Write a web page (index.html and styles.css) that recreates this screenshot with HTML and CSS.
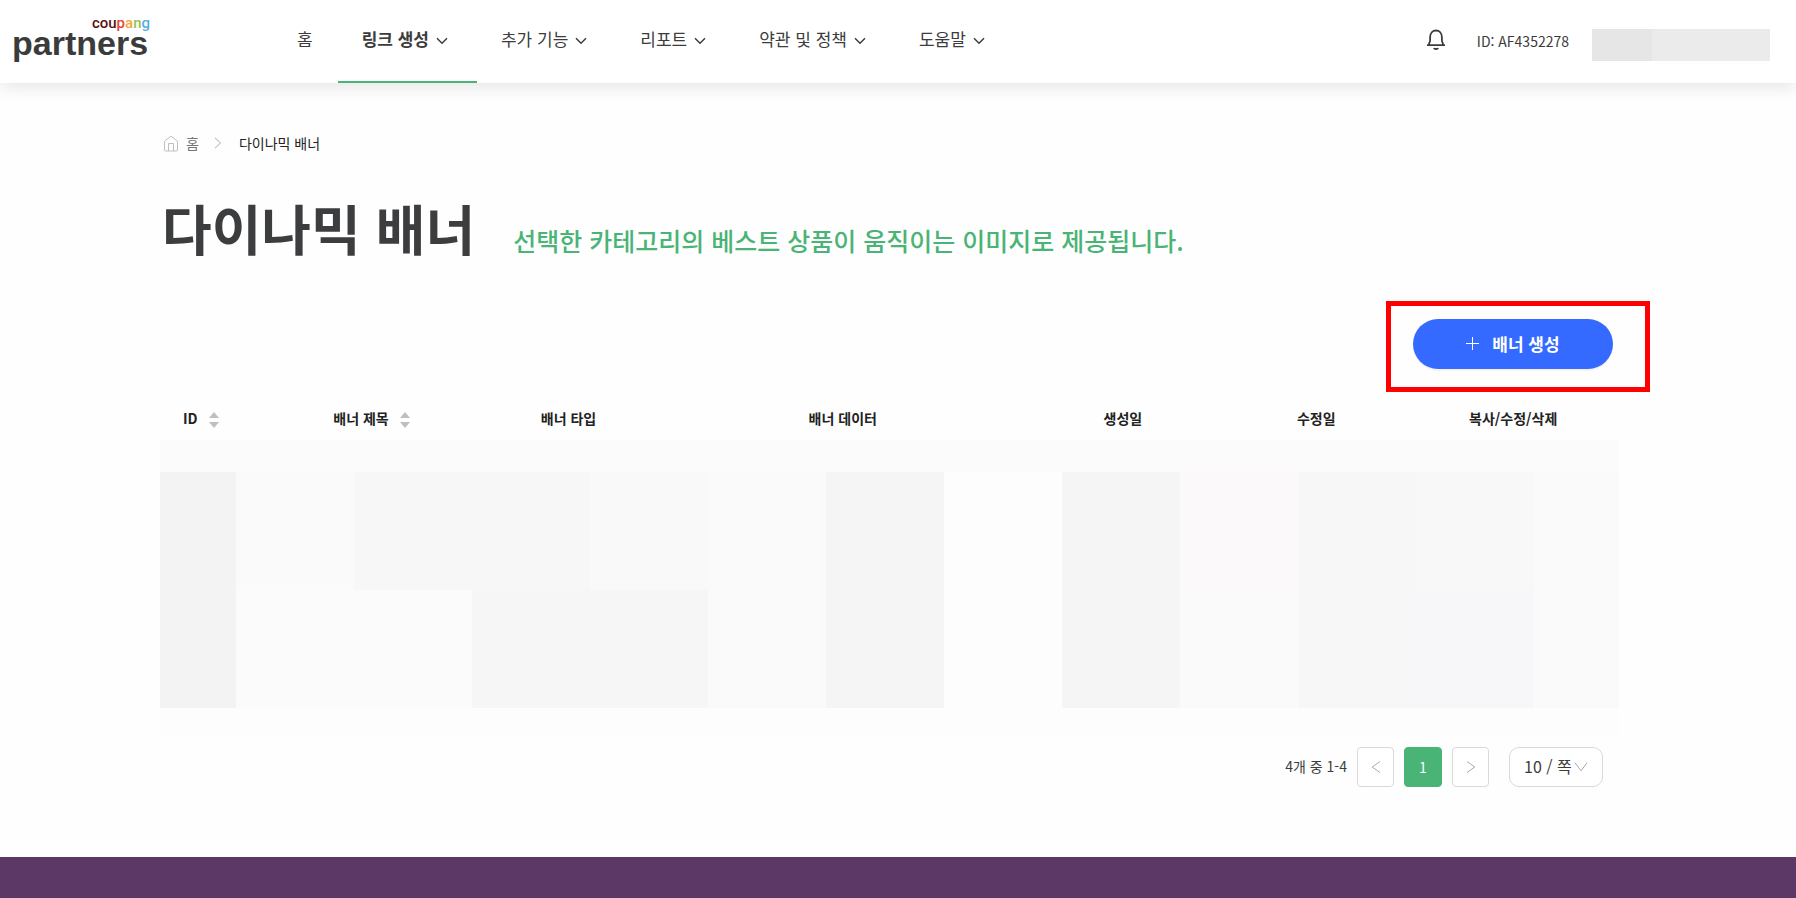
FILE: index.html
```html
<!DOCTYPE html>
<html lang="ko">
<head>
<meta charset="utf-8">
<meta name="viewport" content="width=device-width, initial-scale=1">
<title>다이나믹 배너 - coupang partners</title>
<link rel="stylesheet" href="styles.css">
</head>
<body>
<header class="header">
  <a class="logo" href="#">
    <span class="logo-top"><span class="c-brown">cou</span><span class="c-red">p</span><span class="c-orange">a</span><span class="c-green">n</span><span class="c-blue">g</span></span>
    <span class="logo-main">partners</span>
  </a>
  <nav class="nav">
    <a class="nav-item" href="#">홈</a>
    <a class="nav-item has-menu active" href="#">링크 생성<svg class="chev" viewBox="0 0 12 8"><path d="M1 1.2l5 5 5-5"/></svg></a>
    <a class="nav-item has-menu" href="#">추가 기능<svg class="chev" viewBox="0 0 12 8"><path d="M1 1.2l5 5 5-5"/></svg></a>
    <a class="nav-item has-menu" href="#">리포트<svg class="chev" viewBox="0 0 12 8"><path d="M1 1.2l5 5 5-5"/></svg></a>
    <a class="nav-item has-menu" href="#">약관 및 정책<svg class="chev" viewBox="0 0 12 8"><path d="M1 1.2l5 5 5-5"/></svg></a>
    <a class="nav-item has-menu" href="#">도움말<svg class="chev" viewBox="0 0 12 8"><path d="M1 1.2l5 5 5-5"/></svg></a>
  </nav>
  <div class="user">
    <button class="bell" type="button" aria-label="알림">
      <svg viewBox="0 0 20 22"><path d="M1 16.2h18M3.1 16v-1.600c.8-.9 1-1.900 1-3.400V8.300C4.100 4 6.600 1.500 10 1.500s5.900 2.500 5.900 6.800V11c0 1.500.2 2.500 1 3.400V16"/><path d="M7.900 19c.4 1.300 3.800 1.300 4.200 0"/></svg>
    </button>
    <span class="user-id">ID: AF4352278</span>
    <span class="user-mask"></span>
  </div>
</header>

<main class="main">
  <nav class="crumbs" aria-label="breadcrumb">
    <a class="crumb-home" href="#">
      <svg class="home-icon" viewBox="0 0 16 17"><path d="M1.500 6.200L8 1l6.500 5.200V15a1 1 0 0 1-1 1h-11a1 1 0 0 1-1-1z"/><path d="M5.500 16V8.500h5V16"/></svg>
      <span>홈</span>
    </a>
    <svg class="crumb-sep" viewBox="0 0 8 12"><path d="M1 .8L6.500 6 1 11.200"/></svg>
    <span class="crumb-now">다이나믹 배너</span>
  </nav>

  <div class="title-row">
    <h1 class="title">다이나믹 배너</h1>
    <p class="subtitle">선택한 카테고리의 베스트 상품이 움직이는 이미지로 제공됩니다.</p>
  </div>

  <div class="actions">
    <div class="create-wrap">
      <button class="create" type="button">
        <svg class="plus" viewBox="0 0 14 14"><path d="M0 6.500h13M6.500 0v13"/></svg>
        <span>배너 생성</span>
      </button>
    </div>
  </div>

  <table class="table">
    <colgroup>
      <col class="w-id"><col class="w-title"><col class="w-type"><col class="w-data"><col class="w-created"><col class="w-updated"><col class="w-ops">
    </colgroup>
    <thead>
      <tr>
        <th class="th-id" scope="col"><button class="sort" type="button">ID<svg class="sort-icon" viewBox="0 0 10 16"><path d="M5 0l5 6H0zM5 16l5-6H0z"/></svg></button></th>
        <th scope="col"><button class="sort" type="button">배너 제목<svg class="sort-icon" viewBox="0 0 10 16"><path d="M5 0l5 6H0zM5 16l5-6H0z"/></svg></button></th>
        <th scope="col">배너 타입</th>
        <th scope="col">배너 데이터</th>
        <th scope="col">생성일</th>
        <th scope="col">수정일</th>
        <th scope="col">복사/수정/삭제</th>
      </tr>
    </thead>
    <tbody>
      <tr>
        <td colspan="7">
          <div class="mask-cap"></div>
          <div class="mask">
            <i class="g3"></i><i class="ga"></i><i class="g7"></i><i class="g7"></i><i class="g9"></i><i class="ga"></i><i class="g5"></i><i class="gc"></i><i class="g5"></i><i class="pink"></i><i class="g7"></i><i class="g8"></i><i class="ga"></i>
            <i class="g3"></i><i class="gb"></i><i class="gb"></i><i class="g6"></i><i class="g6"></i><i class="ga"></i><i class="g5"></i><i class="gc"></i><i class="g5"></i><i class="ga"></i><i class="g7"></i><i class="lilac"></i><i class="ga"></i>
          </div>
          <div class="mask-foot"></div>
        </td>
      </tr>
    </tbody>
  </table>

  <div class="pager">
    <span class="total">4개 중 1-4</span>
    <button class="page" type="button" aria-label="이전"><svg viewBox="0 0 10 14"><path d="M9 1.500L1.200 7 9 12.500"/></svg></button>
    <button class="page current" type="button">1</button>
    <button class="page" type="button" aria-label="다음"><svg viewBox="0 0 10 14"><path d="M1 1.500L8.800 7 1 12.500"/></svg></button>
    <div class="size">
      <select class="size-select" aria-label="페이지 크기"><option>10 / 쪽</option></select>
      <svg class="size-arrow" viewBox="0 0 14 10"><path d="M1 .8l6 8 6-8"/></svg>
    </div>
  </div>
</main>

<footer class="footer"></footer>
</body>
</html>
```

FILE: styles.css
```css
* { box-sizing: border-box; }

body {
  margin: 0;
  min-height: 100vh;
  display: flex;
  flex-direction: column;
  background: #fefefe;
  color: #3c3c3c;
  font-family: "Noto Sans CJK KR", sans-serif;
  font-size: 14px;
  line-height: 20px;
}

a { color: inherit; text-decoration: none; }
button, select { font: inherit; color: inherit; }
button { border: 0; background: none; padding: 0; }
svg { display: block; fill: none; stroke: currentColor; }

/* Header */
.header {
  display: flex;
  height: 83px;
  padding: 0 26px 0 12px;
  background: #fff;
  box-shadow: 0 4px 16px rgba(0, 0, 0, 0.1);
}

.logo {
  display: flex;
  flex-direction: column;
  width: 138px;
  padding-top: 15px;
}
.logo-top {
  align-self: flex-end;
  font: 500 15px/16px Roboto, sans-serif;
}
.c-brown { color: #5a1010; }
.c-red { color: #e0483e; }
.c-orange { color: #f4a83c; }
.c-green { color: #93c352; }
.c-blue { color: #56aee2; }
.logo-main {
  font: 700 34px/24px "Liberation Sans", sans-serif;
  color: #3b3b3b;
}

.nav { display: flex; margin-left: 123px; }
.nav-item {
  display: flex;
  align-items: center;
  gap: 7px;
  padding: 0 25px 4px 24px;
  border-bottom: 2px solid transparent;
  font-size: 17px;
  line-height: 24px;
}
.has-menu { padding-right: 29px; }
.active { border-color: #49b475; font-weight: 700; }
.chev { width: 12px; height: 8px; margin-top: 4px; stroke-width: 1.5; }

.user {
  display: flex;
  align-items: flex-start;
  gap: 23px;
  margin-left: auto;
  padding-top: 29px;
}
.bell { width: 20px; height: 22px; margin-right: 8px; }
.bell svg { width: 20px; height: 22px; stroke-width: 1.8; }
.user-id { padding-top: 2px; }
.user-mask {
  width: 178px;
  height: 32px;
  background: linear-gradient(to right, #e6e6e6 60px, #ebebeb 60px);
}

/* Page */
.main {
  flex: 1;
  padding: 50px 177px 70px 160px;
}

.crumbs { display: flex; align-items: center; padding-left: 3px; }
.crumb-home { display: flex; align-items: center; gap: 7px; color: #777; }
.home-icon { width: 16px; height: 17px; color: #bfbfbf; }
.crumb-sep { width: 8px; height: 12px; margin: 0 17px 0 15px; color: #aaa; }
.crumb-now { color: #222; }

.title-row {
  display: flex;
  align-items: baseline;
  gap: 38px;
  padding: 39px 0 0 2px;
}
.title { margin: 0; font-size: 54px; line-height: 72px; font-weight: 700; color: #3c3d3f; }
.subtitle { margin: 0; font-size: 25px; line-height: 36px; font-weight: 500; color: #49b475; }

.actions { display: flex; justify-content: flex-end; padding: 55px 6px 0 0; }
.create-wrap { position: relative; }
.create-wrap::after {
  content: "";
  position: absolute;
  inset: -18px -37px -23px -27px;
  border: 5px solid #f00;
  pointer-events: none;
}
.create {
  display: flex;
  align-items: center;
  justify-content: center;
  gap: 12px;
  width: 200px;
  height: 50px;
  border-radius: 25px;
  background: #346aff;
  box-shadow: 0 2px 0 rgba(0, 0, 0, 0.04);
  color: #fff;
  font-size: 17px;
  font-weight: 700;
}
.plus { width: 14px; height: 14px; }

.table {
  width: 100%;
  margin-top: 29px;
  border-collapse: collapse;
  table-layout: fixed;
}
.w-id { width: 7.6%; }
.w-title { width: 13.8%; }
.w-type { width: 13.2%; }
.w-data { width: 24.4%; }
.w-created { width: 14%; }
.w-updated { width: 12.5%; }
.w-ops { width: 14.5%; }
.table th { height: 42px; padding: 0 0 2px; font-weight: 700; color: #222; }
.table .th-id { padding-left: 23px; text-align: left; }
.sort { display: inline-flex; align-items: center; gap: 11px; font-weight: 700; }
.sort-icon { width: 10px; height: 16px; margin-top: 3px; fill: #bfbfbf; stroke: none; }
.table td { padding: 0; }

.mask-cap { height: 32px; background: #fbfbfb; }
.mask {
  display: grid;
  grid-template-columns: 76fr repeat(11, 118fr) 85fr;
  grid-auto-rows: 118px;
}
.mask-foot { height: 27px; background: #fdfdfd; }
.g3 { background: #f3f3f3; }
.g5 { background: #f5f5f5; }
.g6 { background: #f6f6f6; }
.g7 { background: #f7f7f7; }
.g8 { background: #f8f8f8; }
.g9 { background: #f9f9f9; }
.ga { background: #fafafa; }
.gb { background: #fbfbfb; }
.gc { background: #fdfdfd; }
.pink { background: #fbf9fa; }
.lilac { background: #f7f7f9; }

.pager {
  display: flex;
  justify-content: flex-end;
  align-items: center;
  gap: 10px;
  padding: 12px 16px 0 0;
}
.total { padding-bottom: 3px; }
.page {
  display: flex;
  align-items: center;
  justify-content: center;
  width: 37px;
  height: 40px;
  border: 1px solid #d9d9d9;
  border-radius: 4px;
  background: #fff;
  color: #aaa;
}
.page svg { width: 10px; height: 14px; }
.current { width: 38px; border-color: #49b475; background: #49b475; color: #fff; }
.size { position: relative; margin-left: 10px; }
.size-select {
  display: block;
  appearance: none;
  width: 94px;
  height: 40px;
  padding: 0 0 2px 14px;
  border: 1px solid #d9d9d9;
  border-radius: 10px;
  background: #fff;
  font-size: 16px;
}
.size-arrow {
  position: absolute;
  right: 15px;
  top: 15px;
  width: 14px;
  height: 10px;
  color: #aaa;
  pointer-events: none;
}

.footer { height: 41px; background: #5b3866; }
```
